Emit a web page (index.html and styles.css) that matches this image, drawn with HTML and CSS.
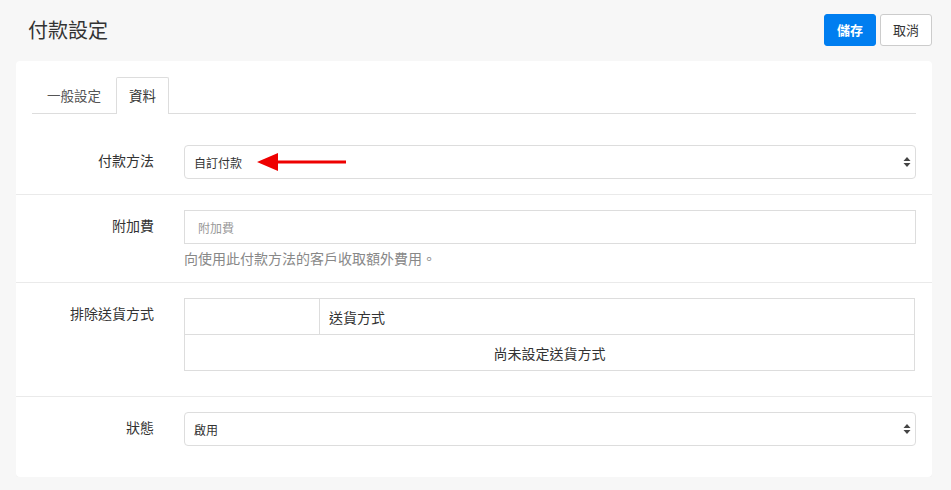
FILE: index.html
```html
<!DOCTYPE html>
<html lang="zh-Hant">
<head>
<meta charset="utf-8">
<link rel="stylesheet" href="styles.css">
</head>
<body>
<div class="page">
  <header class="topbar">
    <h1 class="title">付款設定</h1>
    <div class="actions">
      <button class="btn btn-primary">儲存</button>
      <button class="btn btn-default">取消</button>
    </div>
  </header>
  <section class="card">
    <ul class="tabs">
      <li class="tab">一般設定</li>
      <li class="tab active">資料</li>
    </ul>
    <div class="content">
      <div class="row">
        <label class="label">付款方法</label>
        <div class="field">
          <div class="select">
            <span>自訂付款</span>
            <svg class="caret" width="8" height="12" viewBox="0 0 8 12"><path d="M4 1 L7.5 5 L0.5 5 Z M4 11 L7.5 7 L0.5 7 Z" fill="#444"/></svg>
          </div>
          <svg class="arrow" width="92" height="22" viewBox="0 0 92 22"><path d="M0 11 L21 2 L21 9.5 L89 9.5 L89 12.5 L21 12.5 L21 20 Z" fill="#ee0000"/></svg>
        </div>
      </div>
      <div class="row">
        <label class="label">附加費</label>
        <div class="field">
          <input class="input" type="text" placeholder="附加費">
          <p class="help">向使用此付款方法的客戶收取額外費用。</p>
        </div>
      </div>
      <div class="row row-table">
        <label class="label">排除送貨方式</label>
        <div class="field">
          <table class="table">
            <tr><th class="col-check"></th><th>送貨方式</th></tr>
            <tr><td colspan="2" class="empty">尚未設定送貨方式</td></tr>
          </table>
        </div>
      </div>
      <div class="row last">
        <label class="label">狀態</label>
        <div class="field">
          <div class="select">
            <span>啟用</span>
            <svg class="caret" width="8" height="12" viewBox="0 0 8 12"><path d="M4 1 L7.5 5 L0.5 5 Z M4 11 L7.5 7 L0.5 7 Z" fill="#444"/></svg>
          </div>
        </div>
      </div>
    </div>
  </section>
</div>
</body>
</html>
```
FILE: styles.css
```css
* { box-sizing: border-box; }
html, body {
  margin: 0;
  padding: 0;
  background: #f7f7f7;
  font-family: "Noto Sans CJK TC", "Noto Sans", "Liberation Sans", sans-serif;
  color: #333;
  font-size: 14px;
}
.page {
  padding: 0 19px 0 16px;
}
.topbar {
  display: flex;
  justify-content: space-between;
  align-items: center;
  padding-top: 14px;
  margin-bottom: 15px;
  height: 46px;
}
.title {
  margin: 0;
  padding-left: 12px;
  font-size: 20px;
  font-weight: 400;
  line-height: 32px;
  color: #333;
}
.actions {
  display: flex;
  gap: 4px;
  height: 32px;
}
.btn {
  font-family: inherit;
  font-size: 13px;
  height: 32px;
  padding: 0 12px;
  border-radius: 3px;
  border: 1px solid #ccc;
  line-height: 30px;
}
.btn-primary {
  background: #007ef0;
  border-color: #007ef0;
  color: #fff;
  font-weight: 700;
  width: 52px;
}
.btn-default {
  background: #fff;
  color: #333;
  width: 52px;
}
.card {
  background: #fff;
  border-radius: 4px;
  padding: 16px 0 16px;
  height: 416px;
  box-shadow: 0 1px 1px rgba(0,0,0,0.03);
}
.tabs {
  list-style: none;
  margin: 0 16px;
  padding: 0;
  display: flex;
  border-bottom: 1px solid #ddd;
  height: 37px;
}
.tab {
  padding: 0 14px;
  line-height: 35px;
  height: 37px;
  border: 1px solid transparent;
  border-bottom: none;
  color: #555;
  font-size: 13.5px;
}
.tab.active {
  border-color: #ddd;
  background: #fff;
  color: #333;
  border-radius: 2px 2px 0 0;
  padding: 0 12px;
  margin-bottom: -1px;
}
.content {
  padding-top: 16px;
}
.row {
  display: flex;
  gap: 30px;
  padding: 15px 16px 15px;
  border-bottom: 1px solid #eaeaea;
}
.row.row-table {
  padding-bottom: 25px;
}
.row.last {
  border-bottom: none;
}
.label {
  width: 122px;
  flex: none;
  text-align: right;
  padding-top: 6px;
  line-height: 18px;
  font-size: 14px;
  color: #333;
}
.field {
  flex: 1;
  position: relative;
}
.select {
  height: 34px;
  border: 1px solid #ddd;
  border-radius: 4px;
  display: flex;
  justify-content: space-between;
  align-items: center;
  padding: 0 4px 0 9px;
  font-size: 12px;
  color: #333;
  background: #fff;
}
.caret {
  display: block;
}
.arrow {
  position: absolute;
  left: 73px;
  top: 6px;
}
.input {
  display: block;
  width: 100%;
  height: 34px;
  border: 1px solid #ddd;
  border-radius: 0;
  padding: 0 13px;
  font-family: inherit;
  font-size: 12px;
  color: #333;
  outline: none;
}
.input::placeholder {
  color: #999;
}
.help {
  margin: 5px 0 0;
  font-size: 14px;
  line-height: 18px;
  color: #888;
}
.table {
  width: calc(100% - 1px);
  border-collapse: collapse;
  border: 1px solid #ddd;
}
.table th, .table td {
  border: 1px solid #ddd;
  height: 36px;
  font-weight: 400;
  font-size: 14px;
  padding: 0 9px;
  text-align: left;
}
.table .col-check {
  width: 135px;
}
.table td.empty {
  text-align: center;
}
```
